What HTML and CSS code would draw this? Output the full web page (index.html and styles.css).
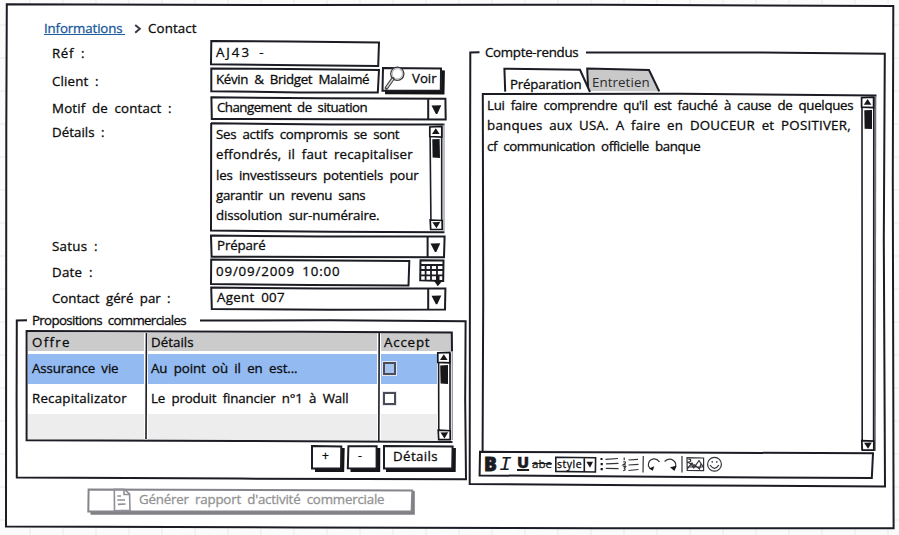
FILE: index.html
```html
<!DOCTYPE html>
<html lang="fr">
<head>
<meta charset="utf-8">
<title>Contact</title>
<link rel="stylesheet" href="styles.css">
</head>
<body>
<svg class="defs" width="0" height="0">
  <defs>
    <path id="down" d="M-5 -4 L4.8 -4.3 L0.8 4.5 L-0.6 4.5Z"/>
    <g id="sb-up"><path class="box" d="M0 0.5 L12 0 L12 10.5 L0 10Z"/><path class="solid" d="M6 1.8 L9.8 7.6 L2.2 7.6Z"/></g>
    <g id="sb-down"><path class="box" d="M0 0 L12 0.5 L12 9.5 L0.5 9.5Z"/><path class="solid" d="M2.2 2.2 L10 2 L6.3 8.2Z"/></g>
  </defs>
</svg>
<main class="window">
  <svg class="ink" viewBox="6 4 888 524"><path class="line" d="M6.8 4.3 L300 5 L600 4.8 L893.3 6 L892.8 180 L893.6 528.2 L600 528.2 L300 527.4 L6 526.6 L6.3 130Z"/></svg>

  <div class="left">
    <nav class="crumbs">
      <a class="link"><span class="t" data-w="77">Informations</span></a>
      <svg class="chev" width="9" height="10" viewBox="0 0 9 10"><path d="M2.2 1 L6.8 4.8 L2.2 8.8"/></svg>
      <span class="t" data-w="47">Contact</span>
    </nav>

    <div class="form">
      <div class="row r-ref"><label><span class="t" data-w="31">Réf :</span></label>
        <div class="field"><svg class="ink" viewBox="211 41 235 27"><path class="line" d="M211.3 40.9 L290 41.5 L379 42.6 L378.2 66 L300 65.3 L211 64.3Z"/></svg><span class="t" data-w="46">AJ43 -</span></div></div>
      <div class="row r-client"><label><span class="t" data-w="45">Client :</span></label>
        <div class="field short"><svg class="ink" viewBox="211 68 171 28"><path class="line" d="M211.3 68.6 L290 69 L379 70 L377.8 92.6 L300 92.4 L211.3 91.2Z"/></svg><span class="t" data-w="152">Kévin &amp; Bridget Malaimé</span></div>
        <button class="btn voir"><svg class="ink" viewBox="382 68 63 28"><path class="shade" d="M385 92.6 L442.8 92.8 L443.2 70.4"/><path class="line paper" d="M383 68 L441 68.6 L440.8 90.6 L382.5 90.8Z"/><circle class="lens" cx="397.3" cy="73.8" r="6.6"/><circle class="lens-in" cx="397.3" cy="73.8" r="5.2"/><path class="handle" d="M392.8 78.8 L386.4 88"/><path class="handle-in" d="M392.5 79.4 L386.8 87.4"/></svg><span class="t" data-w="23">Voir</span></button></div>
      <div class="row r-motif"><label><span class="t" data-w="118">Motif de contact :</span></label>
        <div class="field"><svg class="ink" viewBox="211 96 235 26"><path class="line" d="M211.4 97.3 L320 98.2 L445.4 98.8 L445.7 119.6 L211.8 118.9Z"/><path class="line" d="M428.2 98.6 V119"/><use href="#down" x="436.5" y="109.5"/></svg><span class="t" data-w="149">Changement de situation</span></div></div>
      <div class="row r-details"><label><span class="t" data-w="51">Détails :</span></label>
        <div class="field area"><svg class="ink" viewBox="211 122 235 113"><path class="line" d="M211 123.2 L330 124.4 L444.5 124.5 M211.2 123 L211 230.6 L330 231.8 L444.5 232.2"/><path class="soft" d="M444 124.5 V231"/><path class="line thin" d="M430 126.5 L431 229.5 M441.7 126.5 V229.5"/><use href="#sb-up" x="429.8" y="126.5"/><path class="solid" d="M432.3 139.3 L439.6 139 L440 158 L432.6 157.6Z"/><use href="#sb-down" x="430.2" y="220"/></svg>
          <span class="t" data-w="182">Ses actifs compromis se sont</span>
          <span class="t" data-w="195">effondrés, il faut recapitaliser</span>
          <span class="t" data-w="201">les investisseurs potentiels pour</span>
          <span class="t" data-w="148">garantir un revenu sans</span>
          <span class="t" data-w="162">dissolution sur-numéraire.</span>
        </div></div>
      <div class="row r-status"><label><span class="t" data-w="44">Satus :</span></label>
        <div class="field"><svg class="ink" viewBox="211 235 235 24"><path class="line" d="M211 235.5 L320 236.6 L444.6 236.6 L444 257.2 L330 257 L211.6 256.7Z"/><path class="line" d="M427.6 236.5 V257"/><use href="#down" x="435.5" y="247.5"/></svg><span class="t" data-w="47">Préparé</span></div></div>
      <div class="row r-date"><label><span class="t" data-w="39">Date :</span></label>
        <div class="field"><svg class="ink" viewBox="211 259 235 28"><path class="line" d="M211.2 259.6 L409.3 261 L408.5 285.4 L310 285 L211 283.9Z"/>
          <path class="line" d="M420.5 260.2 L443.5 260.5 L443.2 281 L420.2 280.4Z"/><path class="cal" d="M420 265 H443.5 M420 270 H443.5 M420 275.3 H443.5 M425.6 265 V280.5 M431 265 V281 M437 265 V281"/><path class="solid" d="M436 276 H439.5 V280 H443 L437.8 286.3 L433.5 280 H436Z"/></svg><span class="t" data-w="122">09/09/2009 10:00</span></div></div>
      <div class="row r-agent"><label><span class="t" data-w="117">Contact géré par :</span></label>
        <div class="field"><svg class="ink" viewBox="211 287 235 24"><path class="line" d="M211.2 287.5 L320 288.5 L445.4 288.5 L445 309.5 L330 309.8 L211.8 309Z"/><path class="line" d="M428.2 288.5 V309.5"/><use href="#down" x="436.5" y="299.7"/></svg><span class="t" data-w="66">Agent 007</span></div></div>
    </div>

    <section class="group offers">
      <svg class="ink" viewBox="16 310 450 170"><path class="line" d="M27 320.2 L16.8 320.5 L16.6 400 L16.8 477.4 L240 478.6 L466 479.3 L465.2 400 L465.6 321.3 L330 320.3 L200 320.6"/></svg>
      <h2><span class="t" data-w="153">Propositions commerciales</span></h2>
      <div class="table">
        <div class="tr head"><span class="td"><span class="t" data-w="36">Offre</span></span><span class="td"><span class="t" data-w="41">Détails</span></span><span class="td"><span class="t" data-w="44">Accept</span></span></div>
        <div class="tr sel"><span class="td"><span class="t" data-w="85">Assurance vie</span></span><span class="td"><span class="t" data-w="145">Au point où il en est...</span></span><span class="td"><i class="check"></i></span></div>
        <div class="tr"><span class="td"><span class="t" data-w="93">Recapitalizator</span></span><span class="td"><span class="t" data-w="196">Le produit financier n°1 à Wall</span></span><span class="td"><i class="check"></i></span></div>
        <div class="tr empty"><span class="td"></span><span class="td"></span><span class="td"></span></div>
        <svg class="ink" viewBox="26 330 427 112"><path class="line" d="M452 351.5 L451.8 332.6 L300 331.8 L26.6 331 L26.6 440.2 L240 441 L452.5 442"/><path class="line thin" d="M146.4 333 L146 439 M379.2 332 L378.8 441"/><path class="soft" d="M452.3 352 V440"/><rect class="paper" x="438" y="353" width="12" height="86"/><path class="line thin" d="M438.6 353 L438.8 439 M450 353 V439"/><use href="#sb-up" x="437.8" y="352.4"/><path class="solid" d="M440.2 365.4 L448 365 L448 384 L440.6 383.6Z"/><use href="#sb-down" x="438.2" y="430.2"/></svg>
      </div>
      <div class="actions">
        <button class="btn"><svg class="ink" viewBox="312 446 33 25"><path class="shade" d="M315 470.2 L342.5 470.2 L343 448"/><path class="line paper" d="M312 446 L341.3 446.6 L341 468.6 L312 468.4Z"/></svg><span>+</span></button>
        <button class="btn"><svg class="ink" viewBox="348 446 33 25"><path class="shade" d="M350.5 470.4 L378.5 470.2 L378.6 448"/><path class="line paper" d="M348.4 446.2 L376.6 446.2 L376.6 468.6 L347.8 468.2Z"/></svg><span>-</span></button>
        <button class="btn wide"><svg class="ink" viewBox="384 446 72 25"><path class="shade" d="M386 470.2 L454 470.2 L454.2 448"/><path class="line paper" d="M384 446 L452.6 446.6 L452.2 468.4 L384 468.4Z"/></svg><span class="t" data-w="43">Détails</span></button>
      </div>
    </section>

    <button class="btn report" disabled><svg class="ink" viewBox="88 489 328 26"><path class="shade dim" d="M90.5 513.3 L413.4 513.3 L413.4 491"/><path class="line dim paper" d="M88.6 489.6 L412.3 490.4 L411.6 511.6 L88.3 511.6Z"/><path class="doc" d="M114.3 489.2 H124 L129.6 494 L130 510.4 L114.5 510.8Z M124 489.4 V494.5 H129.5 M117.3 496 H121 M117.3 500 H125 M118 504.4 L125.6 504"/></svg><span class="t" data-w="244">Générer rapport d'activité commerciale</span></button>
  </div>

  <section class="group report-box">
    <svg class="ink" viewBox="470 42 415 445"><path class="line" d="M479.5 52.2 L470.3 52.4 L470 200 L469.7 484 L640 485.3 L885 486.4 L883.8 240 L884.8 53.7 L740 52.4 L586 52.5"/></svg>
    <h2><span class="t" data-w="92">Compte-rendus</span></h2>
    <div class="tabs">
      <svg class="ink" viewBox="504 68 156 26"><path class="line tab-off" d="M588.2 91 L587.2 68.6 L649 70 L659.3 91.5"/><path class="mask" d="M586 91.8 H661 V93 H586Z"/><path class="line paper" d="M505.2 91.6 L504.4 68.8 L580 69.8 L590 92"/></svg>
      <span class="tab on"><span class="t" data-w="70">Préparation</span></span>
      <span class="tab"><span class="t" data-w="56">Entretien</span></span>
    </div>
    <div class="editor">
      <svg class="ink" viewBox="483 94 393 358"><path class="line" d="M482.6 451 L483.2 300 L482.8 94 L680 93.8 L876.5 95.5"/><path class="soft wide-soft" d="M875.5 96 L875 451"/><path class="line thin" d="M862 97 L862.2 450 M873.8 97 L873.6 450"/><use href="#sb-up" x="861.6" y="97.2"/><path class="solid" d="M864.3 110.2 L872 110 L872 129 L864.6 128.8Z"/><use href="#sb-down" x="861.8" y="440.6"/></svg>
      <span class="t" data-w="365">Lui faire comprendre qu'il est fauché à cause de quelques</span>
      <span class="t" data-w="362">banques aux USA. A faire en DOUCEUR et POSITIVER,</span>
      <span class="t" data-w="212">cf communication officielle banque</span>
    </div>
    <div class="toolbar">
      <svg class="ink" viewBox="480 452 393 25"><path class="line paper" d="M480 451.8 L670 452.6 L873 453.2 L871.8 478 L690 477 L479.6 475.4Z"/></svg>
      <b class="tool bold">B</b><i class="tool ital">I</i><b class="tool under">U</b><s class="tool strike">abe</s>
      <span class="style-pick"><svg class="ink" viewBox="555 457 41 16"><path class="line thin" d="M555.8 457.3 L595.6 457.8 L595.4 472 L555.8 471.4Z M584.3 457.6 V471.6"/><path class="solid" d="M586.4 461.8 H593 L590 467.8Z"/></svg><span class="t" data-w="23">style</span></span>
      <svg class="tools" width="124" height="18" viewBox="598 455 124 18">
        <path class="pen" d="M605.5 459.3 L618 458.5 M606 463.8 L618.5 463.4 M605.8 468.4 L618.6 468.6 M628.5 460 L638 459.3 M628.5 465 L638.5 464.3 M628.5 470.5 L638.5 469.5"/>
        <path class="solid" d="M600.5 458 h2 v2 h-2z M600.6 463 h2.2 v2.2 h-2.2z M600.6 468 h2.2 v2.2 h-2.2z"/>
        <path class="pen" d="M624.2 457.5 V460.2 M623.2 462 Q626.5 461 625 463.5 L623 465 H626 M623.2 466.7 H625.6 L624.4 468.3 Q626.5 470.2 623.2 470.6"/>
        <path class="pen" d="M643.3 456 L643 472.5 M682 456 L682 472.5" />
        <path class="pen" d="M659.5 461.8 Q657 458.4 653.4 458.9 Q648 460 648.4 466 L650.5 469 M664.6 461.5 Q668 458.5 671.5 459.4 Q676.8 461.5 675.6 467 L673.4 469.5"/>
        <path class="solid" d="M649 468.6 L654.2 466.2 L652.8 470.8Z M670 467.2 L676.6 465.8 L674.4 471Z"/>
        <path class="pen" d="M687 457.6 L703.6 458 L703.6 470.6 L687.2 470.4Z M687.5 468.5 L692 463 L694.5 467 L699 460.5 L703 466.5 M687.5 462 L691 464 L694 468.5 M694 464.5 L699.5 469 L701 464 M688.4 459.5 Q691.5 458.5 690.5 461.5 L688.5 462 M687.8 467 H703"/>
        <circle class="pen" cx="714.5" cy="464.2" r="6.9"/><path class="pen" d="M710 465 Q714.5 471.5 718.8 465.2 M712.2 461 V462.8 M716.8 461 V462.8"/>
      </svg>
    </div>
  </section>
</main>
<script src="fit.js"></script>
</body>
</html>
```
FILE: styles.css
```css
* { box-sizing: border-box; }
body {
  margin: 0;
  width: 899px;
  height: 535px;
  overflow: hidden;
  padding: 4px 0 0 6px;
  background:
    repeating-linear-gradient(90deg, transparent 0 29px, #f2f2f2 29px 31px, transparent 31px 33px),
    repeating-linear-gradient(180deg, transparent 0 24px, #f2f2f2 24px 26px, transparent 26px 33px),
    #fbfbfb;
  color: #0c0c0c;
  font: 500 13.3px/20px "Open Sans", "Noto Sans", sans-serif;
  word-spacing: 3px;
  -webkit-text-stroke: 0.3px currentColor;
}
.defs { position: absolute; }
.window { position: relative; width: 888px; height: 524px; background: #fff; display: flex; }
.ink { position: absolute; left: 0; top: 0; width: 100%; height: 100%; overflow: visible; pointer-events: none; }
.t { display: inline-block; white-space: nowrap; position: relative; }
.line { fill: none; stroke: #1b1c24; stroke-width: 2; stroke-linejoin: miter; }
.thin { stroke-width: 1.6; }
.soft { fill: none; stroke: #9a9ba8; stroke-width: 1.3; }
.wide-soft { stroke: #70717c; stroke-width: 1.6; }
.box { fill: #fff; stroke: #15161c; stroke-width: 1.7; }
.solid, #down { fill: #17171a; }
.paper { fill: #fff; }
.shade { fill: none; stroke: #141416; stroke-width: 3.4; }
.dim { stroke: #85858c; }
.shade.dim { stroke: #808082; stroke-width: 2.8; }

.left { width: 460px; }
.crumbs { display: flex; height: 37px; padding: 14px 0 0 38px; }
.link { width: 81px; height: 17px; border-bottom: 1.5px solid #1c5fa0; color: #17599a; }
.chev { margin: 6px 6px 0 8px; }
.chev path { fill: none; stroke: #3a3b44; stroke-width: 2; }

.row { display: flex; }
.row label { width: 205px; padding-left: 46px; }
.field { position: relative; width: 235px; padding-left: 5px; }
.field.short { width: 171px; }
.r-ref { height: 27px; } .r-ref label { padding-top: 2px; } .r-ref .field { padding-top: 1px; }
.r-client { height: 28px; } .r-client label { padding-top: 3px; } .r-client .field { padding-top: 1px; }
.r-motif { height: 26px; } .r-motif label { padding-top: 2px; } .r-motif .field { padding: 1px 0 0 6px; }
.r-details { height: 113px; }
.area { display: flex; flex-direction: column; align-items: flex-start; padding-top: 2px; line-height: 20.3px; }
.r-status { height: 24px; } .r-status label { padding-top: 1px; } .r-status .field { padding-left: 6px; }
.r-date { height: 28px; } .r-date label { padding-top: 3px; } .r-date .field { padding-top: 2px; }
.r-agent { height: 24px; } .r-agent label { padding-top: 1px; } .r-agent .field { padding-left: 6px; }
.cal { fill: none; stroke: #1b1c24; stroke-width: 1.8; }

.btn { position: relative; display: flex; align-items: flex-start; border: 0; background: none; padding: 0; margin: 0; color: inherit; font: inherit; word-spacing: inherit; text-align: left; height: 25px; }
.btn > span { position: relative; }
.btn.voir { width: 63px; height: 28px; padding-left: 30px; }
.lens { fill: #fff; stroke: #3c3c3e; stroke-width: 1.3; }
.lens-in { fill: none; stroke: #a9a9a9; stroke-width: 1; }
.handle { stroke: #444; stroke-width: 3.6; stroke-linecap: round; }
.handle-in { stroke: #ddd; stroke-width: 1.4; stroke-linecap: round; }

.group { position: relative; }
.group h2 { margin: 0; font: inherit; height: 20px; }
.offers { width: 450px; height: 170px; margin: -1px 0 0 10px; }
.offers h2 { padding-left: 16px; }
.table { position: relative; width: 427px; height: 112px; margin-left: 10px; padding: 3px 2px 0; }
.tr { display: grid; grid-template-columns: 116px 229px 1fr; column-gap: 4px; width: 409px; height: 30px; line-height: 28px; }
.td { display: block; padding-left: 3px; }
.td:first-child { padding-left: 4px; }
.head { width: 423px; height: 18px; line-height: 18px; margin-bottom: 3px; }
.head .td { background: #cbcbcb; }
.sel .td { background: #93baf1; }
.empty { height: 26px; }
.empty .td { background: #ededed; }
.check { display: block; width: 13px; height: 13px; margin: 8px 0 0 -1px; border: 2px solid #4b4c57; outline: 1px solid #e3e6ee; background: #fff; }
.sel .check { background: #a5c4ee; }
.actions { display: flex; gap: 3px; margin: 4px 0 0 296px; }
.actions .btn { width: 33px; padding-left: 10px; font-size: 12px; }
.actions .btn.wide { width: 72px; padding-left: 9px; font-size: 13.3px; }

.btn.report { width: 328px; height: 26px; margin: 9px 0 0 82px; padding-left: 51px; color: #929292; }
.doc { fill: none; stroke: #8f8f98; stroke-width: 1.6; }

.report-box { width: 415px; height: 445px; margin: 38px 0 0 4px; }
.report-box h2 { height: 26px; padding-left: 15px; }
.tabs { position: relative; display: flex; width: 156px; height: 26px; margin-left: 34px; }
.tab { width: 74px; padding: 4px 0 0 6px; color: #2b2b2b; -webkit-text-stroke: 0; }
.tab.on { width: 82px; padding-top: 6px; color: inherit; -webkit-text-stroke: 0.3px currentColor; }
.tab:last-child { margin-left: 0; }
.tab-off { fill: #c9c9c9; }
.mask { fill: #fff; }
.editor { position: relative; width: 393px; height: 358px; margin-left: 13px; padding: 1px 0 0 4px; display: flex; flex-direction: column; align-items: flex-start; line-height: 20.3px; }
.toolbar { position: relative; display: flex; width: 393px; height: 25px; margin-left: 10px; }
.tool { position: relative; flex: none; color: #1c1c1f; line-height: 24px; text-decoration: none; }
.bold { width: 19px; padding-left: 4px; font-size: 19px; font-weight: 800; -webkit-text-stroke: 0.8px #1c1c1f; }
.ital { width: 17px; padding-left: 0; font: italic 21px/25px "Liberation Mono", monospace; -webkit-text-stroke: 0; }
.under { width: 14px; padding-left: 1px; font-size: 16px; font-weight: 800; line-height: 21px; text-decoration: underline; text-decoration-thickness: 2px; }
.strike { width: 25px; padding-left: 2px; font-size: 11.5px; text-decoration: line-through; }
.style-pick { position: relative; flex: none; width: 41px; height: 16px; margin-top: 5px; padding-left: 2px; font-size: 10.5px; line-height: 14px; }
.tools { position: relative; margin: 3px 0 0 2px; }
.pen { fill: none; stroke: #333339; stroke-width: 1.2; }
```
FILE: fit.js
```js
// Tracks each label out or in so that it fills its nominal width.
document.fonts.ready.then(function () {
  document.querySelectorAll('.t[data-w]').forEach(function (el) {
    var natural = el.getBoundingClientRect().width;
    var n = el.textContent.length;
    var spacing = (Number(el.dataset.w) + 1.6 - natural) / (n - 1);
    el.style.letterSpacing = spacing.toFixed(3) + 'px';
  });
});
```
